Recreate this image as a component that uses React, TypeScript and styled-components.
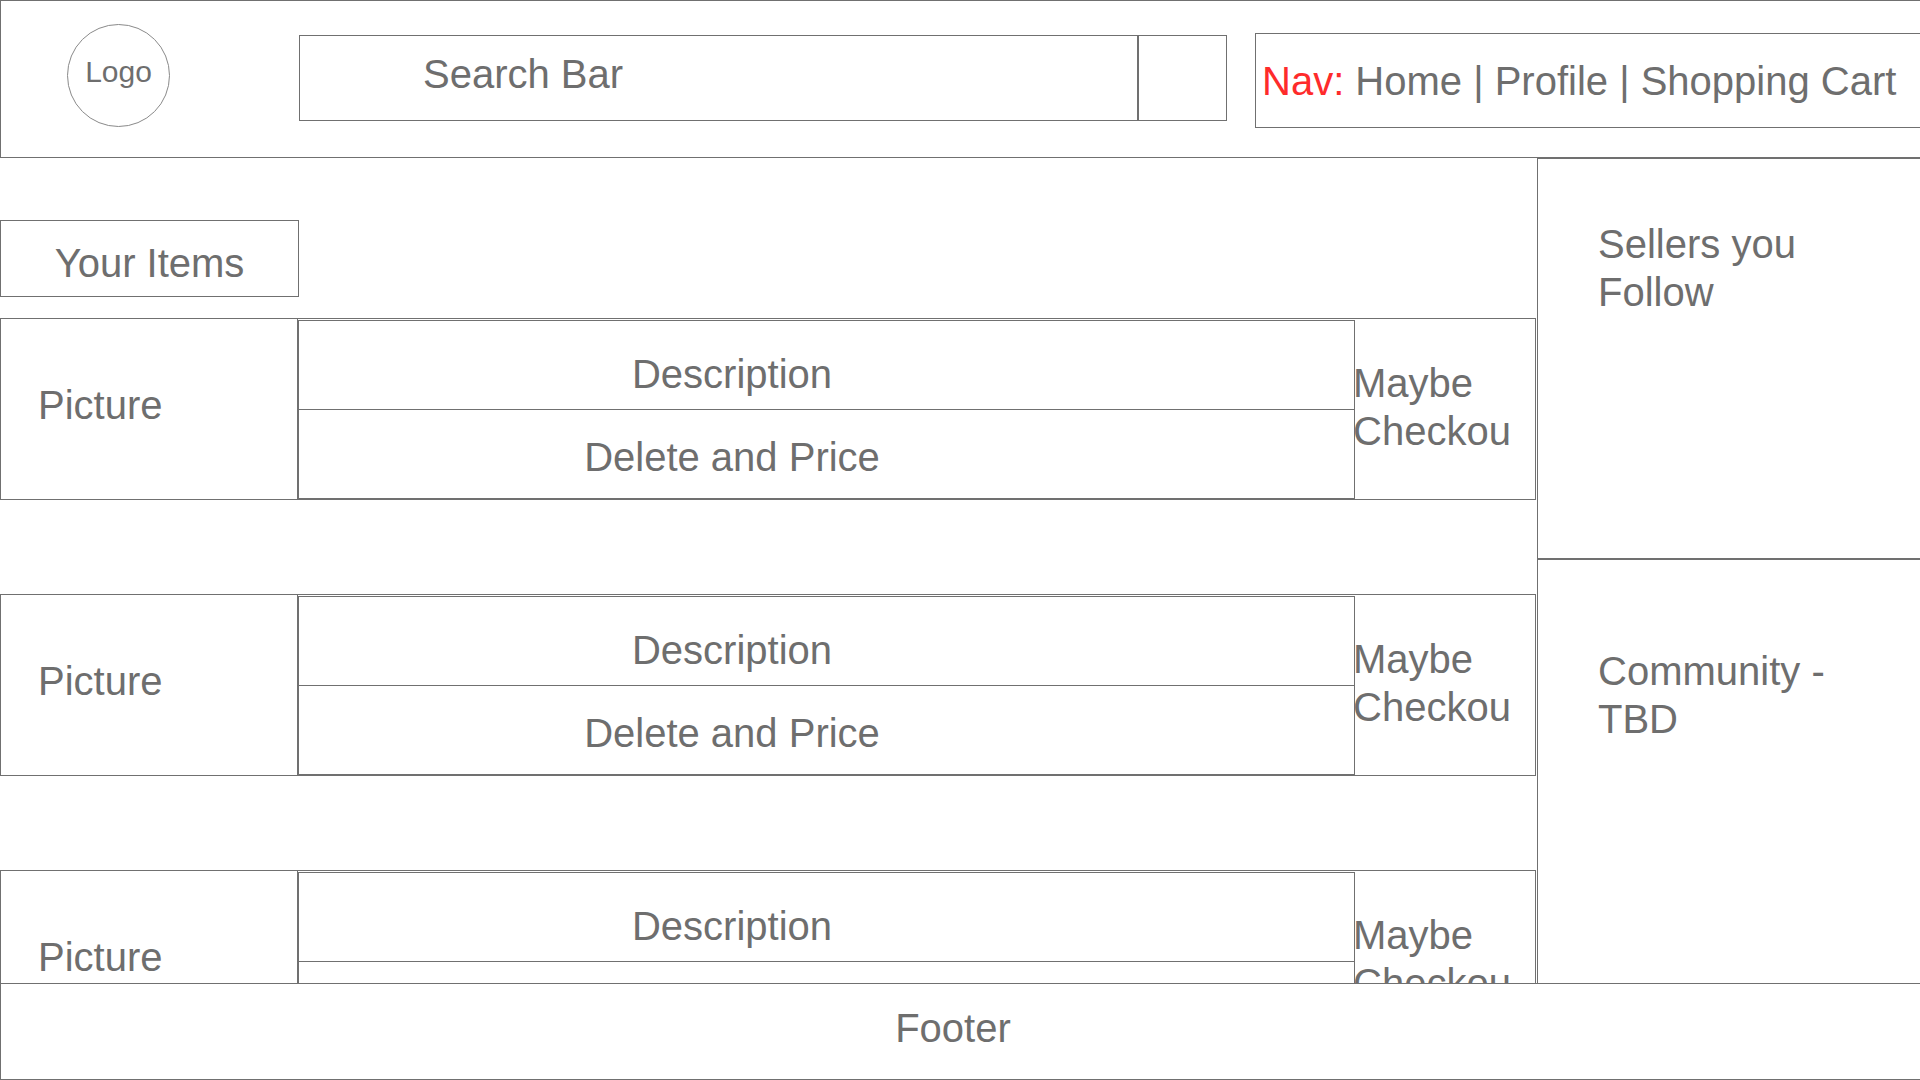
import React from "react";
import styled, { createGlobalStyle } from "styled-components";

const LINE = "#707070";
const INK = "#6e6e6e";
const RED = "#fe2b2b";

const Global = createGlobalStyle`
  html, body { margin: 0; padding: 0; background: #ffffff; overflow: hidden; }
  body {
    font-family: "Liberation Sans", Arial, Helvetica, sans-serif;
    color: ${INK};
    font-size: 40px;
    line-height: 48px;
  }
  * { box-sizing: border-box; }
`;

const Page = styled.div`
  width: 1920px;
  height: 1080px;
  display: flex;
  flex-direction: column;
  background: #ffffff;
  overflow: hidden;
`;

/* ---------- Header ---------- */
const Header = styled.header`
  flex: 0 0 158px;
  display: flex;
  align-items: flex-start;
  border-top: 1px solid ${LINE};
  border-bottom: 1px solid ${LINE};
  border-left: 1px solid ${LINE};
  padding-left: 66px;
`;

const Logo = styled.div`
  flex: 0 0 103px;
  width: 103px;
  height: 103px;
  margin-top: 23px;
  border: 1px solid #8a8a8a;
  border-radius: 50%;
  display: flex;
  align-items: center;
  justify-content: center;
  font-size: 30px;
  line-height: 36px;
  padding-bottom: 8px;
`;

const Search = styled.div`
  flex: 0 0 928px;
  height: 86px;
  margin-top: 34px;
  margin-left: 129px;
  border: 1px solid ${LINE};
  display: flex;
`;

const SearchField = styled.div`
  flex: 1;
  display: flex;
  align-items: center;
  padding-left: 123px;
  padding-bottom: 8px;
`;

const SearchButton = styled.div`
  flex: 0 0 89px;
  border-left: 2px solid ${LINE};
`;

const Nav = styled.nav`
  flex: 1;
  height: 95px;
  margin-top: 32px;
  margin-left: 28px;
  border: 1px solid ${LINE};
  border-right: none;
  display: flex;
  align-items: center;
  padding-left: 6px;
  white-space: nowrap;
`;

const NavLabel = styled.span`
  color: ${RED};
`;

/* ---------- Body ---------- */
const Middle = styled.div`
  flex: 1;
  display: flex;
  overflow: hidden;
`;

const Content = styled.main`
  flex: 0 0 1537px;
  display: flex;
  flex-direction: column;
  padding-top: 62px;
`;

const SectionTitle = styled.div`
  flex: 0 0 77px;
  width: 299px;
  border: 1px solid ${LINE};
  display: flex;
  align-items: center;
  justify-content: center;
  padding-top: 8px;
  margin-bottom: 21px;
`;

const ItemList = styled.div`
  display: flex;
  flex-direction: column;
  gap: 94px;
`;

const Row = styled.div`
  flex: 0 0 182px;
  width: 1536px;
  height: 182px;
  border: 1px solid ${LINE};
  display: flex;
`;

const PictureCell = styled.div`
  flex: 0 0 297px;
  border-right: 1px solid ${LINE};
  display: flex;
  align-items: center;
  padding-left: 37px;
  padding-bottom: 8px;
`;

const DescBox = styled.div`
  flex: 0 0 1057px;
  margin-top: 1px;
  border: 1px solid ${LINE};
  display: flex;
  flex-direction: column;
`;

const DescCell = styled.div<{ $top: number; $divider?: boolean }>`
  ${(p) => (p.$divider ? "flex: 0 0 89px; border-bottom: 1px solid " + LINE + ";" : "flex: 1;")}
  padding-top: ${(p) => p.$top}px;
  padding-right: 189px;
  text-align: center;
  white-space: nowrap;
`;

const CheckoutCell = styled.div`
  flex: 1;
  display: flex;
  align-items: center;
  padding-bottom: 4px;
`;

const CheckoutText = styled.div`
  width: 157px;
  margin-left: -2px;
  overflow: hidden;
`;

const Sidebar = styled.aside`
  flex: 1;
  display: flex;
  flex-direction: column;
  border-left: 1px solid ${LINE};
  border-top: 1px solid ${LINE};
`;

const SideBlock = styled.section<{ $top: number; $divider?: boolean }>`
  ${(p) => (p.$divider ? "flex: 0 0 401px; border-bottom: 2px solid " + LINE + ";" : "flex: 1;")}
  padding: ${(p) => p.$top}px 60px 0 60px;
`;

/* ---------- Footer ---------- */
const Footer = styled.footer`
  flex: 0 0 97px;
  border-top: 1px solid ${LINE};
  border-bottom: 1px solid ${LINE};
  border-left: 1px solid ${LINE};
  display: flex;
  align-items: center;
  justify-content: center;
  padding-right: 15px;
  padding-bottom: 7px;
`;

const items = [1, 2, 3];

export default function App() {
  return (
    <>
      <Global />
      <Page>
        <Header>
          <Logo>Logo</Logo>
          <Search>
            <SearchField>Search Bar</SearchField>
            <SearchButton />
          </Search>
          <Nav>
            <NavLabel>Nav:</NavLabel>&nbsp;Home | Profile | Shopping Cart
          </Nav>
        </Header>
        <Middle>
          <Content>
            <SectionTitle>Your Items</SectionTitle>
            <ItemList>
              {items.map((i) => (
                <Row key={i}>
                  <PictureCell>Picture</PictureCell>
                  <DescBox>
                    <DescCell $top={29} $divider>
                      Description
                    </DescCell>
                    <DescCell $top={23}>Delete and Price</DescCell>
                  </DescBox>
                  <CheckoutCell>
                    <CheckoutText>Maybe Checkout</CheckoutText>
                  </CheckoutCell>
                </Row>
              ))}
            </ItemList>
          </Content>
          <Sidebar>
            <SideBlock $top={61} $divider>
              Sellers you Follow
            </SideBlock>
            <SideBlock $top={87}>Community - TBD</SideBlock>
          </Sidebar>
        </Middle>
        <Footer>Footer</Footer>
      </Page>
    </>
  );
}
